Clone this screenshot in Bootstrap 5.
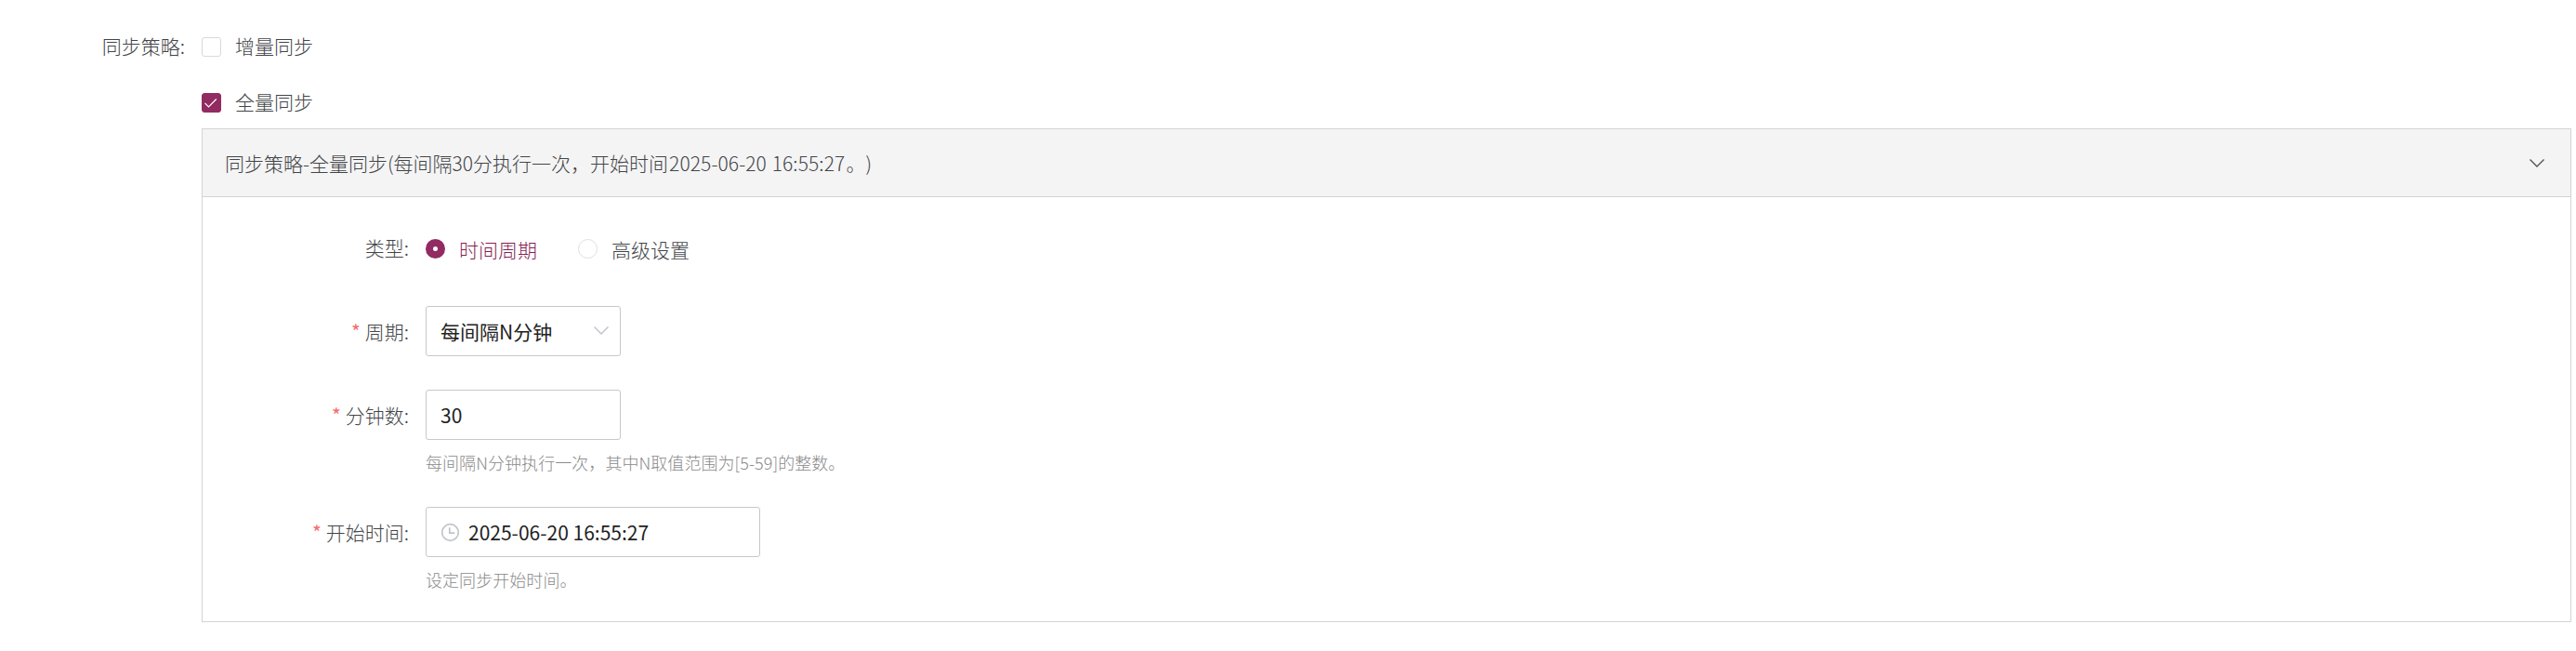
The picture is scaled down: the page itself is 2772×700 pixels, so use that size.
<!DOCTYPE html>
<html lang="zh-CN">
<head>
<meta charset="utf-8">
<title>同步策略</title>
<link href="https://cdn.jsdelivr.net/npm/bootstrap@5.3.0/dist/css/bootstrap.min.css" rel="stylesheet">
<style>
  body { font-family: "Noto Sans CJK SC", sans-serif; font-size: 21px; line-height: 30px; color: #424448; background: #fff; min-height: 700px; }
  .sync-form { padding: 20px 5px 0 0; }
  .thin { font-weight: 300; }
  .outer-label { width: 217px; padding-right: 18px; text-align: right; }
  .first-choice { height: 61px; }
  .second-choice { height: 57px; padding-top: 2px; }
  .first-choice .outer-label, .first-choice .choice-text, .second-choice .choice-text { padding-bottom: 3px; }
  .form-check-input.box-check { width: 21px; height: 21px; margin: 0; border: 1px solid #d9d9d9; border-radius: 3px; flex: none; box-shadow: none; }
  .form-check-input.box-check:checked { background-color: #922b61; border-color: #922b61; background-size: 21px 21px;
    background-image: url("data:image/svg+xml,%3csvg xmlns='http://www.w3.org/2000/svg' viewBox='0 0 21 21'%3e%3cpath fill='none' stroke='%23fff' stroke-width='1.2' d='M3.5 10.8l4 4.2 8.3-8.5'/%3e%3c/svg%3e"); }
  .form-check-input.round-check { width: 21px; height: 21px; margin: 0; border: 1px solid #dcdfe6; flex: none; }
  .form-check-input.round-check:checked { border: 8px solid #922b61; background: #fff; }
  .radio-choice { padding-top: 3px; }
  .radio-gap { margin-left: 44px; }
  .choice-text { margin-left: 15px; }
  .strategy { margin-left: 217px; height: 531px; border: 1px solid #d4d4d4; border-radius: 0; }
  .strategy .card-header { height: 73px; padding: 0 28px 0 24px; background: #f4f4f4; border-bottom: 1px solid #d4d4d4; border-radius: 0; color: inherit; }
  .strategy .card-body { padding: 27px 0 0; color: inherit; }
  .summary { text-spacing-trim: space-all; font-kerning: none; }
  .stamp { letter-spacing: .1px; word-spacing: 1px; margin: 0 1px; }
  .field { margin-bottom: 36px; }
  .field-line { height: 54px; }
  .field-label { width: 240px; padding-right: 18px; text-align: right; }
  .field-label.required::before { content: "*"; color: #f56c6c; font-weight: 400; margin-right: 5px; }
  .accent { color: #861f55; }
  .control { height: 54px; width: 210px; padding: 0 12px 0 15px; border: 1px solid #c8c8c8; border-radius: 3px; font-size: 21px; line-height: 30px; color: #222; box-shadow: none; }
  .control-wide { width: 360px; }
  .clock { margin-right: 9px; }
  .hint { height: 36px; padding-top: 9px; margin-left: 240px; font-size: 18px; line-height: 30px; color: #8a8a8a; letter-spacing: .06px; }
</style>
</head>
<body>
<form class="sync-form">
  <div class="first-choice d-flex align-items-center thin">
    <div class="outer-label">同步策略:</div>
    <label class="d-flex align-items-center"><input class="form-check-input box-check" type="checkbox"><span class="choice-text">增量同步</span></label>
  </div>
  <div class="second-choice d-flex align-items-center thin">
    <div class="outer-label"></div>
    <label class="d-flex align-items-center"><input class="form-check-input box-check" type="checkbox" checked><span class="choice-text">全量同步</span></label>
  </div>
  <div class="card strategy">
    <div class="card-header d-flex align-items-center justify-content-between thin">
      <span class="summary">同步策略-全量同步(每间隔30分执行一次，开始时间<span class="stamp">2025-06-20 16:55:27</span>。<span class="d-inline-block">)</span></span>
      <svg width="16" height="10" viewBox="0 0 16 10" fill="none" stroke="#555" stroke-width="1.4"><path d="M.5 1.5 8 9 15.5 1.5"/></svg>
    </div>
    <div class="card-body">
      <div class="field">
        <div class="field-line d-flex align-items-center thin">
          <div class="field-label">类型:</div>
          <label class="radio-choice d-flex align-items-center accent"><input class="form-check-input round-check" type="radio" name="type" checked><span class="choice-text">时间周期</span></label>
          <label class="radio-choice radio-gap d-flex align-items-center"><input class="form-check-input round-check" type="radio" name="type"><span class="choice-text">高级设置</span></label>
        </div>
      </div>
      <div class="field">
        <div class="field-line d-flex align-items-center">
          <div class="field-label required thin">周期:</div>
          <div class="control d-flex align-items-center justify-content-between"><span>每间隔N分钟</span><svg width="16" height="10" viewBox="0 0 16 10" fill="none" stroke="#c0c4cc" stroke-width="1.5"><path d="M.5 .5 8 8 15.5 .5"/></svg></div>
        </div>
      </div>
      <div class="field">
        <div class="field-line d-flex align-items-center">
          <div class="field-label required thin">分钟数:</div>
          <input class="form-control control" type="text" value="30">
        </div>
        <div class="hint thin">每间隔N分钟执行一次，其中N取值范围为[5-59]的整数。</div>
      </div>
      <div class="field mb-0">
        <div class="field-line d-flex align-items-center">
          <div class="field-label required thin">开始时间:</div>
          <div class="control control-wide d-flex align-items-center"><svg class="clock" width="21" height="21" viewBox="0 0 21 21" fill="none" stroke="#c0c4cc" stroke-width="1.7"><circle cx="10.5" cy="10.5" r="8.8"/><path d="M9.8 5.2v6h5.5"/></svg><span>2025-06-20 16:55:27</span></div>
        </div>
        <div class="hint thin">设定同步开始时间。</div>
      </div>
    </div>
  </div>
</form>
<script src="https://cdn.jsdelivr.net/npm/bootstrap@5.3.0/dist/js/bootstrap.bundle.min.js"></script>
</body>
</html>
